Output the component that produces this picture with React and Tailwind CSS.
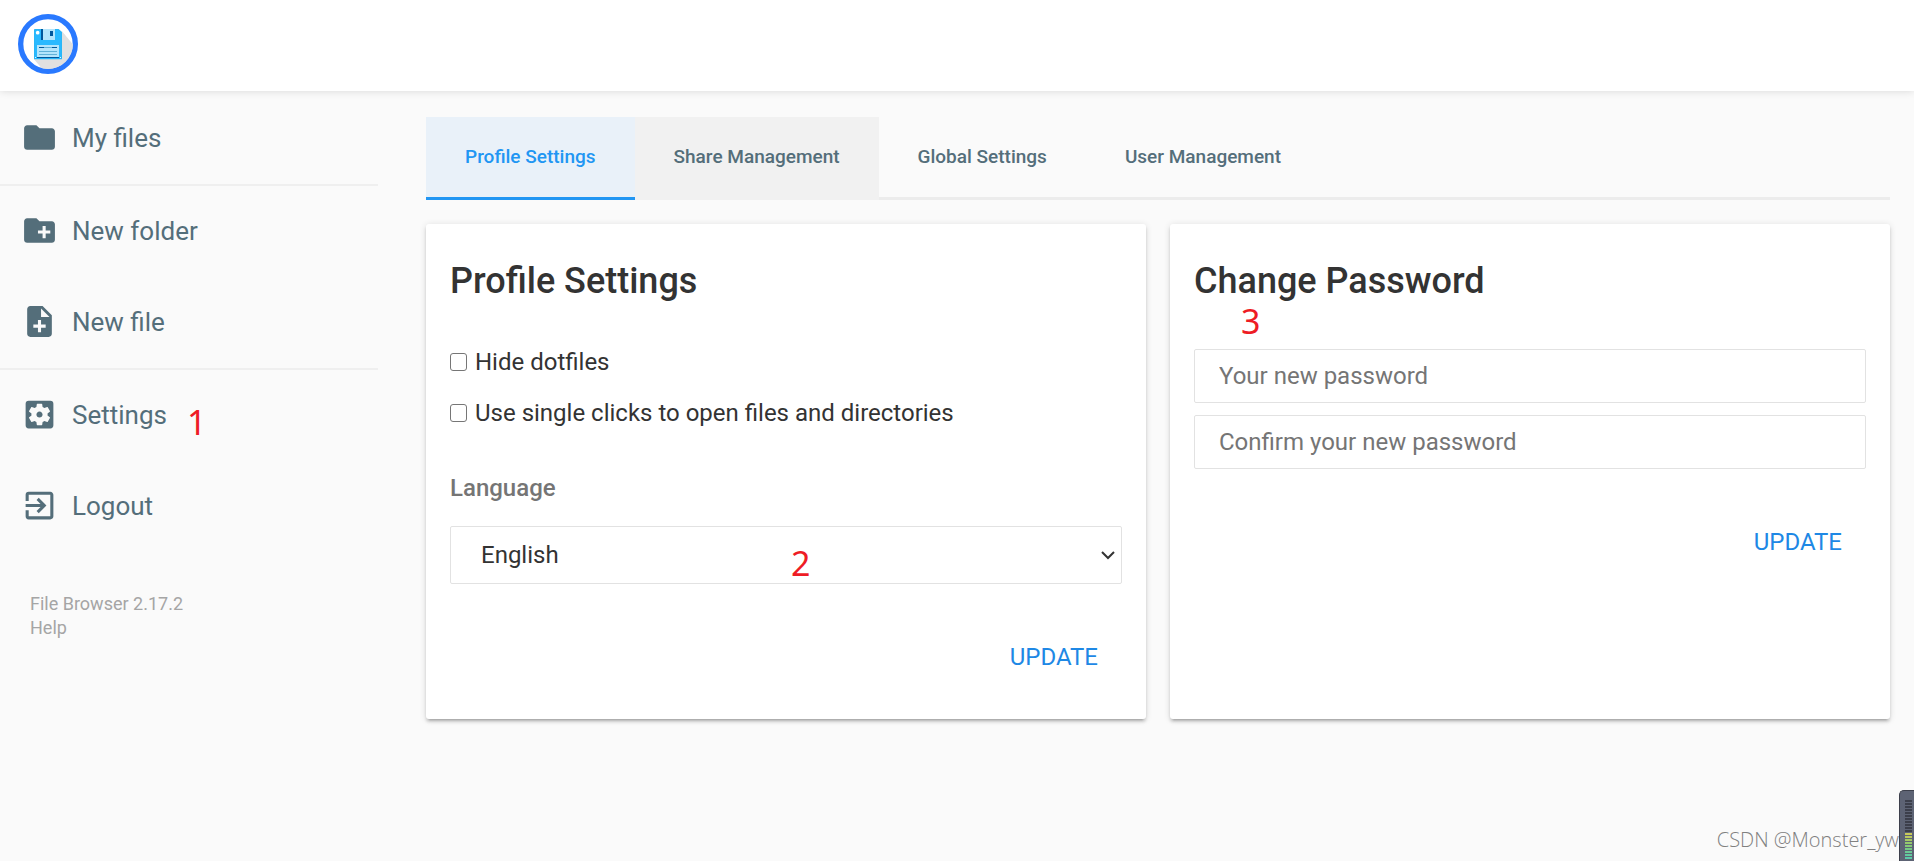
import { MdFolder, MdCreateNewFolder, MdNoteAdd, MdSettingsApplications, MdExitToApp } from "react-icons/md";

function Logo() {
  return (
    <svg viewBox="0 0 180 180" className="size-[60px]" role="img" aria-label="File Browser">
      <defs>
        <clipPath id="disc">
          <circle cx="90" cy="90" r="75" />
        </clipPath>
      </defs>
      <circle cx="90" cy="90" r="82" fill="#fff" stroke="#2979ff" strokeWidth="16" />
      <path d="M132 52L185 115V185H90L48 136Z" fill="#e0e0e0" clipPath="url(#disc)" />
      <path d="M50 45H122L132 54V134Q132 136 130 136H50Q48 136 48 134V47Q48 45 50 45Z" fill="#29b6f6" />
      <path d="M51 48H121L129 56V133H51Z" fill="#29b9ff" />
      <circle cx="59" cy="56" r="5.5" fill="#fff" />
      <rect x="69" y="45" width="6" height="33" fill="#01579b" />
      <rect x="75" y="45" width="36" height="33" fill="#b3e5fc" />
      <rect x="96" y="51" width="9" height="15" fill="#01579b" />
      <rect x="57" y="93" width="66" height="37" fill="#b3e5fc" />
      <path d="M63 100.500H117M63 112.500H117M63 121.500H117" stroke="#4fa6d0" strokeWidth="2.500" />
      <path d="M63 100.500H78M102 100.500H117" stroke="#01579b" strokeWidth="3" />
      <rect x="57" y="129" width="66" height="3" fill="#01579b" />
      <rect x="51" y="129" width="3" height="3" fill="#e1f5fe" />
      <rect x="126" y="129" width="3" height="3" fill="#e1f5fe" />
    </svg>
  );
}

function Annotation({ children, className }) {
  return (
    <span className={`pointer-events-none absolute font-['Noto_Sans',sans-serif] text-[34px] leading-none text-[#ee1c25] ${className}`}>
      {children}
    </span>
  );
}

function NavItem({ icon: Icon, children, note }) {
  return (
    <a href="#" className="flex h-[91px] items-center gap-[14px] pb-[2px] pl-[21px] text-[26px] text-[#546e7a]">
      <Icon className="size-[37px]" aria-hidden="true" />
      <span className="relative">
        {children}
        {note}
      </span>
    </a>
  );
}

function Tab({ children, className = "border-transparent text-[#546e7a]" }) {
  return (
    <a href="#" className={`-mb-[3px] flex h-[83px] items-center border-b-[3px] px-[39px] text-[19px] font-medium ${className}`}>
      {children}
    </a>
  );
}

function Card({ title, children }) {
  return (
    <form className="flex flex-col rounded-[3px] bg-white px-6 shadow-[0_3px_3px_rgba(0,0,0,0.14),0_1px_7px_rgba(0,0,0,0.12),0_4px_2px_-3px_rgba(0,0,0,0.2)]">
      <h2 className="mt-9 text-[36px] leading-[42px] font-medium">{title}</h2>
      {children}
    </form>
  );
}

function Check({ id, label }) {
  return (
    <div className="flex h-[51px] items-center gap-2">
      <input id={id} type="checkbox" className="h-[18px] w-[17px] appearance-none rounded-[3px] border border-[#767676] bg-white checked:bg-[#2979ff]" />
      <label htmlFor={id}>{label}</label>
    </div>
  );
}

function UpdateButton() {
  return (
    <button type="button" className="self-end px-6 py-3 text-[24px] leading-7 text-[#1e88e5] uppercase">
      Update
    </button>
  );
}

const meter = [
  "bg-[#3c3f4b]", "bg-[#3c3f4b]", "bg-[#3c3f4b]", "bg-[#3c3f4b]", "bg-[#3c3f4b]", "bg-[#3c3f4b]",
  "bg-[#3c3f4b]", "bg-[#3c3f4b]", "bg-[#3c3f4b]", "bg-[#3c3f4b]", "bg-[#3c3f4b]",
  "bg-[#c9c95a]", "bg-[#b9c95e]", "bg-[#a5c964]", "bg-[#95c96c]", "bg-[#85c977]",
  "bg-[#76c985]", "bg-[#6bc994]", "bg-[#62c9a0]", "bg-[#5cc9a8]",
];

const inputClass =
  "h-[54px] w-full rounded-[2px] border border-[#e2e2e2] bg-white px-6 text-[24px] placeholder:text-[#757575]";

export default function App() {
  return (
    <div className="relative min-h-screen overflow-hidden bg-[#fafafa] font-[Roboto,sans-serif] text-[24px] leading-7 text-[#333]">
      <header className="relative flex h-[91px] items-start bg-white pt-[14px] pl-[18px] shadow-[0_0_8px_rgba(0,0,0,0.14)]">
        <Logo />
      </header>
      <div className="flex items-start pt-[2px]">
        <aside className="w-[378px] shrink-0">
          <nav>
            <NavItem icon={MdFolder}>My files</NavItem>
            <div className="border-t-2 border-[#efefef]">
              <NavItem icon={MdCreateNewFolder}>New folder</NavItem>
              <NavItem icon={MdNoteAdd}>New file</NavItem>
            </div>
            <div className="border-t-2 border-[#efefef]">
              <NavItem
                icon={MdSettingsApplications}
                note={<Annotation className="top-1 left-full ml-5">1</Annotation>}
              >
                Settings
              </NavItem>
              <NavItem icon={MdExitToApp}>Logout</NavItem>
            </div>
          </nav>
          <div className="mt-10 flex flex-col pl-[30px] text-[18px] leading-6 text-[#a5a5a5]">
            <span>File Browser 2.17.2</span>
            <a href="#">Help</a>
          </div>
        </aside>
        <main className="ml-12 min-w-0 flex-1 pt-6 pr-6">
          <nav className="flex border-b-[3px] border-[#ececec]">
            <Tab className="border-[#2196f3] bg-[#e9f1f9] text-[#2196f3]">Profile Settings</Tab>
            <Tab className="border-[#f1f1f1] bg-[#f1f1f1] text-[#546e7a]">Share Management</Tab>
            <Tab>Global Settings</Tab>
            <Tab>User Management</Tab>
          </nav>
          <div className="mt-6 grid grid-cols-2 gap-6">
            <Card title="Profile Settings">
              <div className="mt-[34px]">
                <Check id="dotfiles" label="Hide dotfiles" />
                <Check id="clicks" label="Use single clicks to open files and directories" />
              </div>
              <label htmlFor="language" className="mt-9 font-medium text-[#757575]">Language</label>
              <div className="relative mt-6">
                <select id="language" defaultValue="English" className="h-[58px] w-full appearance-none rounded-[2px] border border-[#e2e2e2] bg-white px-[30px] text-[24px]">
                  <option>English</option>
                </select>
                <svg viewBox="0 0 14 9" className="pointer-events-none absolute top-[25px] right-[7px] h-[9px] w-[14px]" aria-hidden="true">
                  <path d="M1 1L7 7L13 1" fill="none" stroke="#333" strokeWidth="2" />
                </svg>
                <Annotation className="top-5 left-1/2 ml-[5px]">2</Annotation>
              </div>
              <div className="mt-[47px] mb-9 flex flex-col">
                <UpdateButton />
              </div>
            </Card>
            <Card title="Change Password">
              <div className="relative mt-[47px] flex flex-col gap-3">
                <Annotation className="-top-[45px] left-[47px]">3</Annotation>
                <input type="password" aria-label="Your new password" placeholder="Your new password" className={inputClass} />
                <input type="password" aria-label="Confirm your new password" placeholder="Confirm your new password" className={inputClass} />
              </div>
              <div className="mt-[47px] flex flex-col">
                <UpdateButton />
              </div>
            </Card>
          </div>
        </main>
      </div>
      <div className="absolute right-0 bottom-0 flex items-end">
        <span className="pb-[7px] font-['Open_Sans',sans-serif] text-[20px] font-light text-[#808080]">CSDN @Monster_yw</span>
        <div className="flex h-[71px] w-[15px] flex-col items-end gap-px overflow-hidden rounded-tl-[5px] border-t border-l border-[#3c3f4b] bg-[#5d6374] pt-[9px] pr-[2px]">
          {meter.map((color, i) => (
            <span key={i} className={`h-[2px] w-[7px] shrink-0 ${color}`} />
          ))}
        </div>
      </div>
    </div>
  );
}
